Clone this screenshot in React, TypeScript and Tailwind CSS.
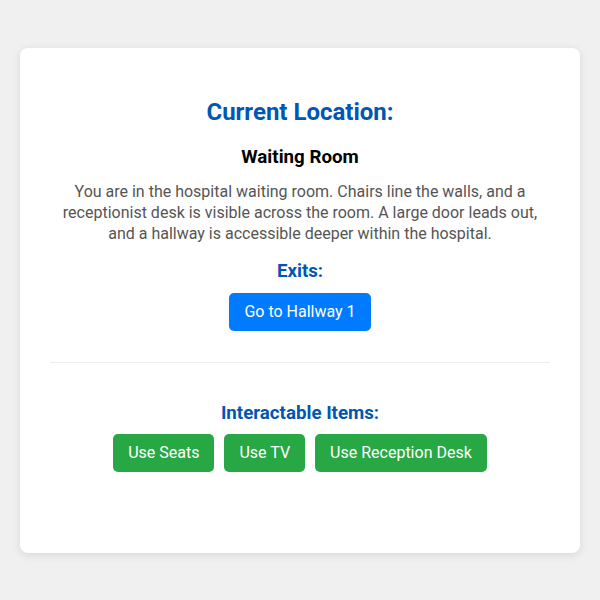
export default function App() {
  const items = ["Use Seats", "Use TV", "Use Reception Desk"];
  return (
    <div className="flex min-h-screen items-center justify-center bg-[#f0f0f0] font-['Roboto',sans-serif]">
      <div className="w-[560px] rounded-lg bg-white px-[30px] pt-[50px] pb-[81px] text-center shadow-[0_2px_10px_rgba(0,0,0,0.1)]">
        <h2 className="text-[24px] leading-[28px] font-bold text-[#0056b3]">Current Location:</h2>
        <h3 className="mt-[20px] text-[18.72px] leading-[22px] font-bold text-black">Waiting Room</h3>
        <p className="mt-[13px] text-[16px] leading-[21px] text-[#555]">
          You are in the hospital waiting room. Chairs line the walls, and a receptionist desk is visible across
          the room. A large door leads out, and a hallway is accessible deeper within the hospital.
        </p>
        <h3 className="mt-[16px] text-[18.72px] leading-[22px] font-bold text-[#0056b3]">Exits:</h3>
        <div className="mt-[11px] flex justify-center gap-[10px]">
          <button className="rounded-[5px] bg-[#007bff] px-[15px] py-[10px] text-[16px] leading-[18px] text-white">
            Go to Hallway 1
          </button>
        </div>
        <div className="mt-[31px] h-px bg-[#eee]" />
        <h3 className="mt-[39px] text-[18.72px] leading-[22px] font-bold text-[#0056b3]">Interactable Items:</h3>
        <div className="mt-[10px] flex justify-center gap-[10px]">
          {items.map((t) => (
            <button
              key={t}
              className="rounded-[5px] bg-[#28a745] px-[15px] py-[10px] text-[16px] leading-[18px] text-white"
            >
              {t}
            </button>
          ))}
        </div>
      </div>
    </div>
  );
}
